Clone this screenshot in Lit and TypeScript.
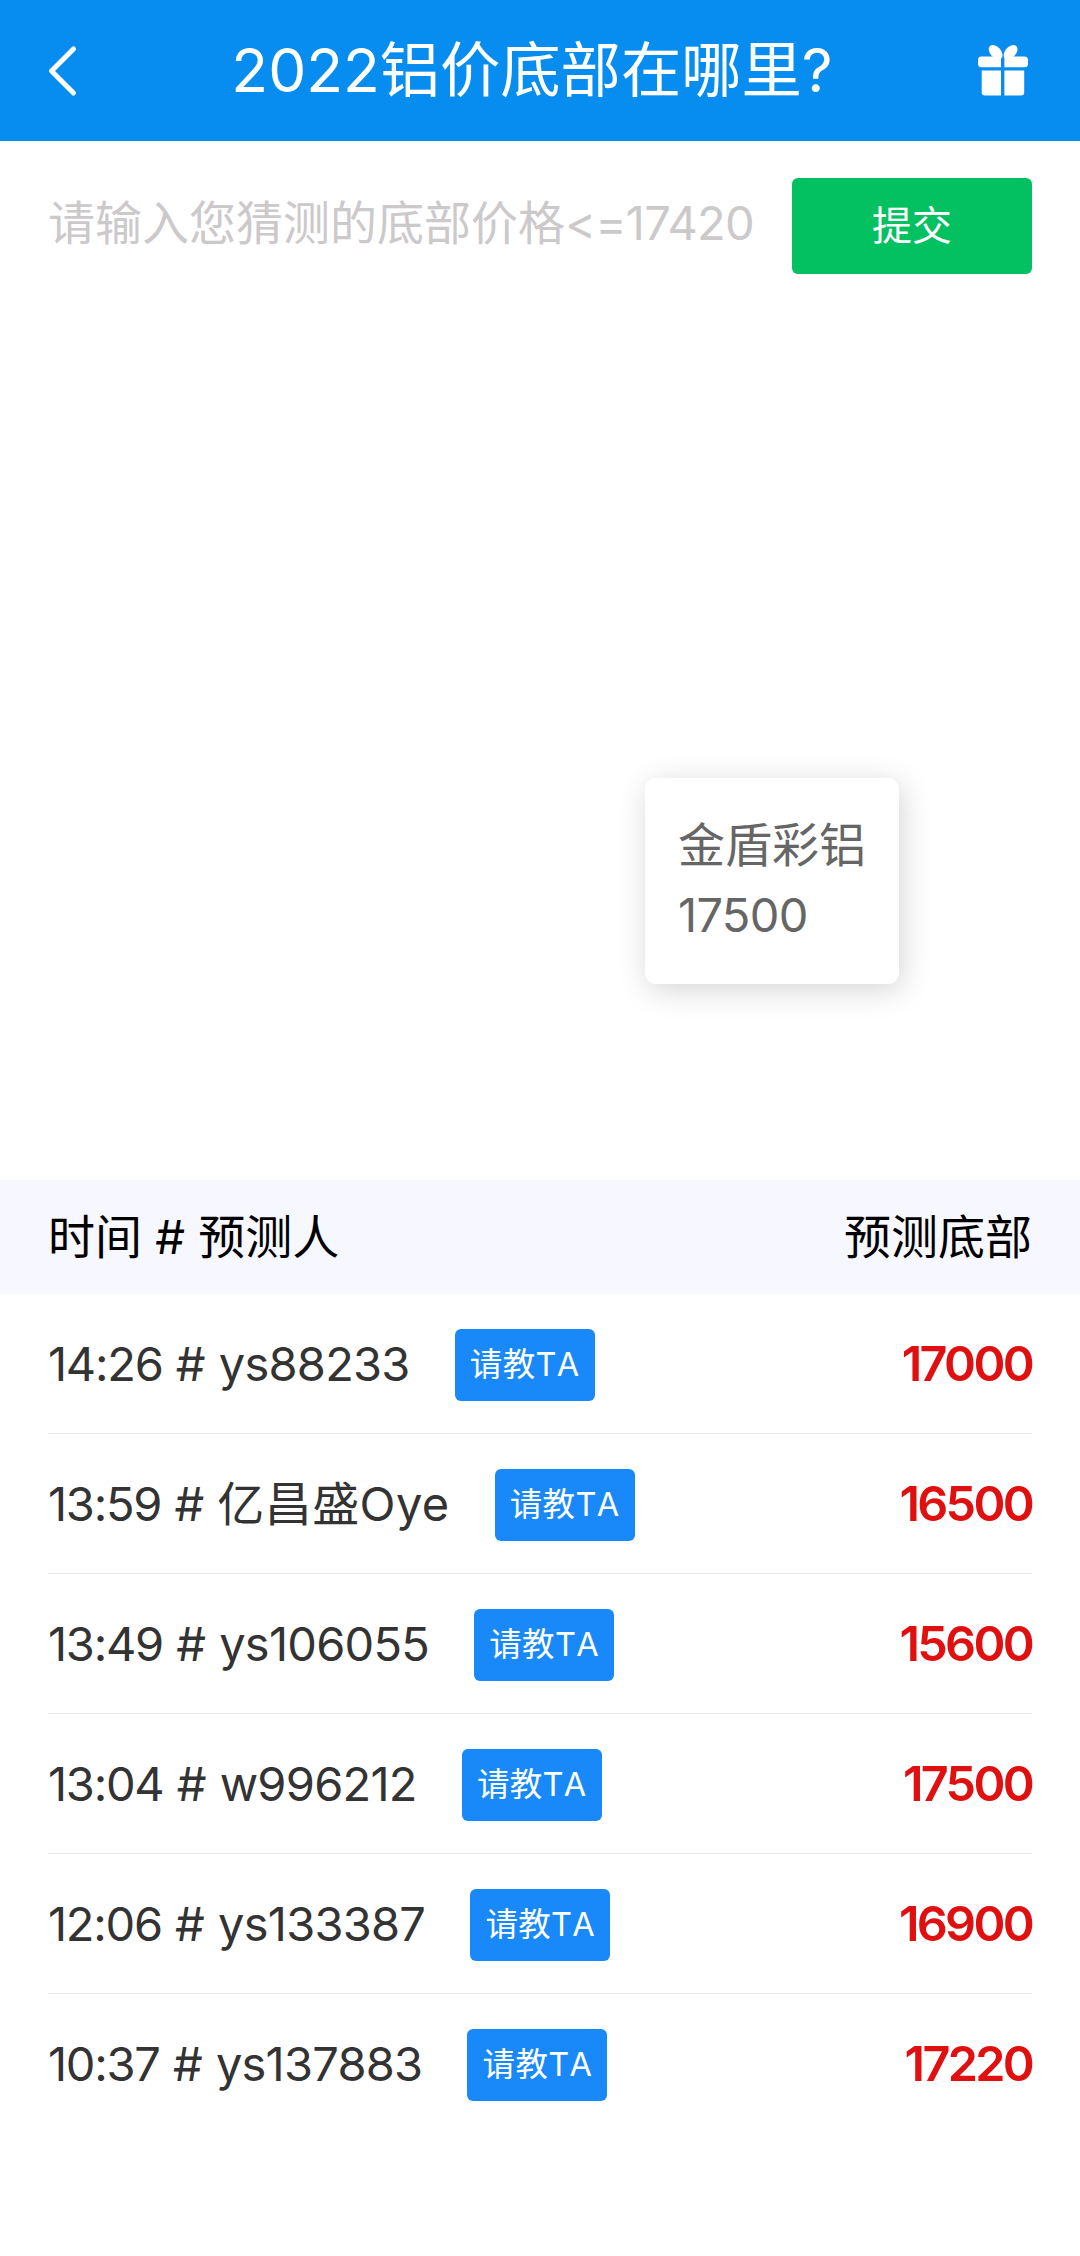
import { LitElement, html, css } from "lit";
import { customElement } from "lit/decorators.js";
import { classMap } from "lit/directives/class-map.js";

interface Guess {
  time: string;
  user: string;
  price: string;
}

const guesses: Guess[] = [
  { time: "14:26", user: "ys88233", price: "17000" },
  { time: "13:59", user: "亿昌盛Oye", price: "16500" },
  { time: "13:49", user: "ys106055", price: "15600" },
  { time: "13:04", user: "w996212", price: "17500" },
  { time: "12:06", user: "ys133387", price: "16900" },
  { time: "10:37", user: "ys137883", price: "17220" },
];

@customElement("app-root")
export class AppRoot extends LitElement {
  static styles = css`
    :host {
      display: block;
      min-height: 2256px;
      background: #fff;
      color: #333;
      font-family: Inter, "Noto Sans CJK SC", sans-serif;
      font-size: 47px;
    }
    * {
      box-sizing: border-box;
    }
    .bar {
      display: flex;
      align-items: center;
      justify-content: space-between;
      height: 141px;
      padding: 0 48px;
      background: #078df0;
      color: #fff;
    }
    .bar h1 {
      margin: 0 16px 0 0;
      font-size: 60.3px;
      font-weight: 400;
      line-height: 90px;
      white-space: nowrap;
    }
    .bar svg {
      display: block;
      width: 54px;
      height: 54px;
      overflow: visible;
    }
    .form {
      display: flex;
      align-items: center;
      justify-content: space-between;
      padding: 37px 48px 0;
      height: 133px;
    }
    .placeholder {
      color: #ccc9cb;
      line-height: 70px;
      white-space: nowrap;
      padding-bottom: 6px;
    }
    .num {
      letter-spacing: -0.7px;
    }
    .submit {
      width: 240px;
      height: 96px;
      border: 0;
      padding: 0;
      border-radius: 6px;
      background: #03c160;
      color: #fff;
      font: inherit;
      font-size: 40px;
      line-height: 94px;
    }
    .chart {
      position: relative;
      height: 906px;
    }
    .tip {
      position: absolute;
      left: 645px;
      top: 504px;
      width: 254px;
      height: 206px;
      padding: 32px 33px;
      border-radius: 11px;
      background: #fff;
      color: #666;
      line-height: 70px;
      box-shadow: 3px 6px 30px rgba(20, 0, 10, 0.17);
      white-space: nowrap;
    }
    .head {
      display: flex;
      align-items: center;
      justify-content: space-between;
      height: 114px;
      padding: 0 48px;
      background: #f7f7ff;
      color: #000;
      line-height: 70px;
    }
    .rows {
      padding: 0 48px;
    }
    .row {
      display: flex;
      align-items: center;
      height: 140px;
      border-bottom: 1px solid #ebebed;
      line-height: 70px;
      white-space: nowrap;
    }
    .row:last-child {
      border-bottom-color: transparent;
    }
    .time {
      letter-spacing: -1.25px;
    }
    .user {
      letter-spacing: 0.4px;
    }
    .user.latin {
      letter-spacing: -0.75px;
    }
    .ask {
      width: 140px;
      height: 72px;
      margin: 3px 0 0 45px;
      border-radius: 6px;
      background: #1989fa;
      color: #fff;
      font-size: 32.5px;
      font-kerning: none;
      letter-spacing: 0.3px;
      line-height: 71px;
      text-align: center;
    }
    .price {
      margin-left: auto;
      color: #e01010;
      font-size: 48.5px;
      font-weight: 600;
      letter-spacing: -2.7px;
    }
  `;

  render() {
    return html`
      <header class="bar">
        <svg viewBox="0 0 54 54" fill="none" stroke="#fff" stroke-width="5" stroke-linecap="round" stroke-linejoin="round">
          <path d="M25.5 5 3.5 27 25.5 49" />
        </svg>
        <h1>2022铝价底部在哪里?</h1>
        <svg viewBox="0 0 54 54" fill="#fff">
          <path d="M3.5 12.5h19.5v10.7H3.5q-3.5 0-3.5-3.5v-3.7q0-3.5 3.5-3.5zM26.4 12.5h20.1q3.5 0 3.5 3.5v3.7q0 3.5-3.5 3.5H26.4z" />
          <path d="M3.7 26.5H23v25H7q-3.3 0-3.3-3.3zM26.4 26.5H46.2v21.7q0 3.3-3.3 3.3H26.4z" />
          <ellipse cx="17.6" cy="8.2" rx="8.4" ry="5.4" transform="rotate(48 17.6 8.2)" />
          <ellipse cx="32.6" cy="8.2" rx="8.4" ry="5.4" transform="rotate(-48 32.6 8.2)" />
        </svg>
      </header>
      <section class="form">
        <span class="placeholder">请输入您猜测的底部价格<span class="num">&lt;=17420</span></span>
        <button class="submit">提交</button>
      </section>
      <section class="chart">
        <div class="tip">金盾彩铝<br /><span class="num">17500</span></div>
      </section>
      <div class="head"><span>时间 # 预测人</span><span>预测底部</span></div>
      <div class="rows">
        ${guesses.map(
          (g) => html`<div class="row">
            <span class="who"><span class="time">${g.time}</span> # <span class=${classMap({ user: true, latin: /^\w+$/.test(g.user) })}>${g.user}</span></span>
            <span class="ask">请教TA</span>
            <span class="price">${g.price}</span>
          </div>`
        )}
      </div>
    `;
  }
}
